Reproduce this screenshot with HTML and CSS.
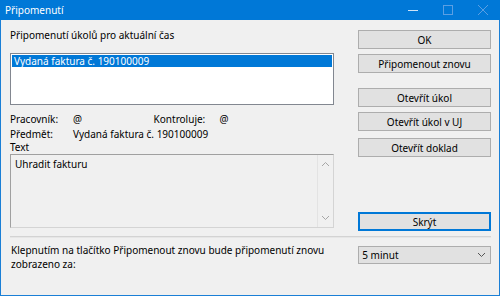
FILE: index.html
```html
<!DOCTYPE html>
<html>
<head>
  <title>Připomenutí</title>
  <link rel="stylesheet" href="styles.css">
</head>
<body>
  <div class="window">
    <div class="titlebar">
      <span class="title">Připomenutí</span>
      <div class="controls">
        <svg width="10" height="10" viewBox="0 0 10 10"><path d="M0 5.5h10" stroke="#cfe3f7" stroke-width="1"/></svg>
        <svg width="10" height="10" viewBox="0 0 10 10"><rect x="0.5" y="0.5" width="9" height="9" fill="none" stroke="#5b9fe3" stroke-width="1"/></svg>
        <svg width="10" height="10" viewBox="0 0 10 10"><path d="M0 0L10 10M10 0L0 10" stroke="#5b9fe3" stroke-width="1"/></svg>
      </div>
    </div>
    <div class="content">
      <div class="main">
        <div class="left">
          <div class="caption">Připomenutí úkolů pro aktuální čas</div>
          <div class="listbox">
            <div class="item selected">Vydaná faktura č. 190100009</div>
          </div>
          <div class="info first">
            <span class="lbl">Pracovník:</span><span class="val short">@</span>
            <span class="lbl2">Kontroluje:</span><span class="val">@</span>
          </div>
          <div class="info">
            <span class="lbl">Předmět:</span><span class="val">Vydaná faktura č. 190100009</span>
          </div>
          <div class="info last">Text</div>
          <div class="textbox">
            <div class="text">Uhradit fakturu</div>
            <div class="scrollbar">
              <svg width="9" height="6" viewBox="0 0 9 6"><path d="M1 5L4.5 1.5L8 5" fill="none" stroke="#a6a6a6" stroke-width="1"/></svg>
              <svg width="9" height="6" viewBox="0 0 9 6"><path d="M1 1L4.5 4.5L8 1" fill="none" stroke="#a6a6a6" stroke-width="1"/></svg>
            </div>
          </div>
        </div>
        <div class="right">
          <button class="btn b-ok">OK</button>
          <button class="btn b-again">Připomenout znovu</button>
          <button class="btn b-task">Otevřít úkol</button>
          <button class="btn b-uj">Otevřít úkol v UJ</button>
          <button class="btn b-doc">Otevřít doklad</button>
          <button class="btn b-hide">Skrýt</button>
        </div>
      </div>
      <div class="separator"></div>
      <div class="bottom">
        <div class="note">Klepnutím na tlačítko Připomenout znovu bude připomenutí znovu<br>zobrazeno za:</div>
        <div class="combo">
          <span>5 minut</span>
          <svg width="9" height="6" viewBox="0 0 9 6"><path d="M1 1L4.5 4.5L8 1" fill="none" stroke="#555" stroke-width="1"/></svg>
        </div>
      </div>
    </div>
  </div>
</body>
</html>
```

FILE: styles.css
```css
body {
  margin: 0;
  font-family: "Noto Sans", "Open Sans", sans-serif;
  font-size: 10px;
  color: #000;
}
.window {
  width: 500px;
  height: 296px;
  box-sizing: border-box;
  border: 1px solid #1a7fd6;
  border-top: none;
  background: #f0f0f0;
}
.titlebar {
  height: 20px;
  margin: 0 -1px;
  background: #0078d7;
  color: #fff;
  display: flex;
  align-items: center;
  justify-content: space-between;
  padding-left: 5px;
}
.controls {
  display: flex;
  gap: 25px;
  padding-right: 12px;
}
.content {
  padding: 0 8px 0 9px;
}
.main {
  display: flex;
  gap: 24px;
  height: 216px;
}
.left {
  width: 324px;
}
.caption {
  margin-top: 8px;
  line-height: 14px;
}
.listbox {
  margin-top: 11px;
  height: 48px;
  background: #fff;
  border: 1px solid #828790;
  padding: 1px;
}
.item {
  line-height: 12px;
  padding: 0 2px;
}
.selected {
  background: #0078d7;
  color: #fff;
}
.info {
  line-height: 14px;
}
.first {
  margin-top: 7px;
  margin-bottom: 1px;
}
.last {
  line-height: 12px;
}
.lbl {
  display: inline-block;
  width: 63px;
}
.short {
  display: inline-block;
  width: 78px;
}
.lbl2 {
  display: inline-block;
  width: 66px;
}
.textbox {
  margin-top: 1px;
  height: 72px;
  border: 1px solid #a0a0a0;
  border-right-color: #d4d4d4;
  border-bottom-color: #d4d4d4;
  display: flex;
}
.text {
  flex: 1;
  padding: 3px 4px;
  line-height: 13px;
}
.scrollbar {
  width: 15px;
  border-left: 1px solid #e3e3e3;
  display: flex;
  flex-direction: column;
  justify-content: space-between;
  align-items: center;
  padding: 6px 0;
}
.right {
  width: 133px;
  display: flex;
  flex-direction: column;
}
.btn {
  height: 19px;
  padding: 0;
  background: #e1e1e1;
  border: 1px solid #adadad;
  font-family: inherit;
  font-size: 10px;
  color: #000;
}
.b-ok {
  margin-top: 10px;
}
.b-again {
  margin-top: 5px;
}
.b-task {
  margin-top: 15px;
}
.b-uj {
  margin-top: 5px;
}
.b-doc {
  margin-top: 7px;
}
.b-hide {
  margin-top: 55px;
  border: 2px solid #0078d7;
}
.separator {
  height: 1px;
  background: #d3d3d3;
  border-bottom: 1px solid #e6e6e6;
}
.bottom {
  display: flex;
  gap: 24px;
  margin-top: 8px;
}
.note {
  width: 324px;
  line-height: 14px;
  margin-top: -3px;
  padding-left: 1px;
}
.combo {
  width: 133px;
  height: 18px;
  box-sizing: border-box;
  background: #e1e1e1;
  border: 1px solid #adadad;
  display: flex;
  align-items: center;
  justify-content: space-between;
  padding: 0 4px 0 3px;
}
```
